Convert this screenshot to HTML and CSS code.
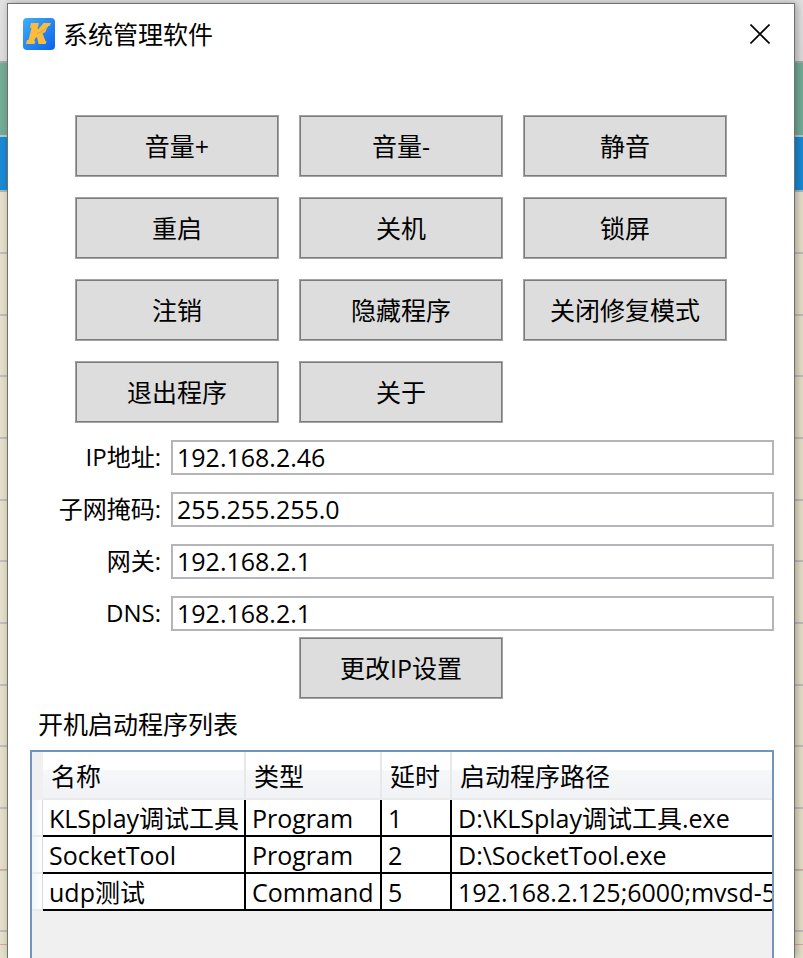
FILE: index.html
```html
<!DOCTYPE html>
<html lang="zh-CN">
<head>
    <meta charset="UTF-8">
    <meta name="viewport" content="width=device-width, initial-scale=1.0">
    <title>系统管理软件</title>
    <link rel="stylesheet" href="styles.css">
</head>
<body>
    <main class="window">
        <header class="title-bar">
            <svg class="logo" viewBox="0 0 32 32" aria-hidden="true">
                <defs>
                    <linearGradient id="logo-bg" x1="0" y1="0" x2="1" y2="1">
                        <stop offset="0" stop-color="#3fb0f8"/>
                        <stop offset="1" stop-color="#0c62ea"/>
                    </linearGradient>
                </defs>
                <rect width="32" height="32" rx="4" fill="url(#logo-bg)"/>
                <path d="M8 5h8l-1.500 6h1l5-6h7.500l-1.500 3h-1l-2 3-1 3-3 1.500 3 7.500h1l-.8 3h-7.200l-1.500-7-2 1.500-.7 2.500h1l-.7 3H3l1-4h1.500L8.500 10H7z" fill="#fdbb3c"/>
                <path d="M14 15.500c4-1 7-3 10-6.500" fill="none" stroke="#c9a860" stroke-width="1"/>
            </svg>
            <h1 class="title">系统管理软件</h1>
            <button class="close" type="button" aria-label="关闭">
                <svg viewBox="0 0 20 20" aria-hidden="true">
                    <path d="M0.500 0.500L19.500 19.500M19.500 0.500L0.500 19.500" fill="none" stroke="#000" stroke-width="1.600"/>
                </svg>
            </button>
        </header>

        <div class="actions">
            <button class="btn" type="button">音量+</button>
            <button class="btn" type="button">音量-</button>
            <button class="btn" type="button">静音</button>
            <button class="btn" type="button">重启</button>
            <button class="btn" type="button">关机</button>
            <button class="btn" type="button">锁屏</button>
            <button class="btn" type="button">注销</button>
            <button class="btn" type="button">隐藏程序</button>
            <button class="btn" type="button">关闭修复模式</button>
            <button class="btn" type="button">退出程序</button>
            <button class="btn" type="button">关于</button>
        </div>

        <form class="network">
            <div class="field">
                <label for="ip">IP地址:</label>
                <input id="ip" type="text" value="192.168.2.46">
            </div>
            <div class="field">
                <label for="mask">子网掩码:</label>
                <input id="mask" type="text" value="255.255.255.0">
            </div>
            <div class="field">
                <label for="gateway">网关:</label>
                <input id="gateway" type="text" value="192.168.2.1">
            </div>
            <div class="field">
                <label for="dns">DNS:</label>
                <input id="dns" type="text" value="192.168.2.1">
            </div>
        </form>

        <div class="actions apply">
            <button class="btn" type="button">更改IP设置</button>
        </div>

        <h2 class="list-title" id="list-title">开机启动程序列表</h2>
        <div class="grid-box">
            <table class="programs" aria-labelledby="list-title">
                <colgroup>
                    <col class="col-handle">
                    <col class="col-name">
                    <col class="col-type">
                    <col class="col-delay">
                    <col>
                </colgroup>
                <thead>
                    <tr>
                        <td class="corner"></td>
                        <th>名称</th>
                        <th>类型</th>
                        <th>延时</th>
                        <th>启动程序路径</th>
                    </tr>
                </thead>
                <tbody>
                    <tr>
                        <td class="handle"></td>
                        <td>KLSplay调试工具</td>
                        <td>Program</td>
                        <td>1</td>
                        <td>D:\KLSplay调试工具.exe</td>
                    </tr>
                    <tr>
                        <td class="handle"></td>
                        <td>SocketTool</td>
                        <td>Program</td>
                        <td>2</td>
                        <td>D:\SocketTool.exe</td>
                    </tr>
                    <tr>
                        <td class="handle"></td>
                        <td>udp测试</td>
                        <td>Command</td>
                        <td>5</td>
                        <td>192.168.2.125;6000;mvsd-5</td>
                    </tr>
                </tbody>
            </table>
        </div>
    </main>
</body>
</html>
```
FILE: styles.css
```css
* {
    box-sizing: border-box;
}

/* The sheet behind the window: toolbar, green and blue bands, ruled rows */
body {
    margin: 0;
    height: 100vh;
    padding: 3px 8px 0 7px;
    overflow: hidden;
    display: flex;
    font-family: "Open Sans", "Noto Sans CJK SC", sans-serif;
    font-size: 25px;
    line-height: 32px;
    color: #000;
    background-color: #e6e0ca;
    background-image:
        linear-gradient(#e2e2e2 0, #dcdcdc 61px, #a8a8a8 61px, #a8a8a8 63px, #74ac98 63px, #74ac98 135px, #b4c8cc 135px, #b4c8cc 137px, #1a8ad6 137px, #1a8ad6 190px, #a8b8bc 190px, #a8b8bc 192px, transparent 192px),
        linear-gradient(transparent 869px, #dca8a0 869px, #dca8a0 870px, transparent 870px, transparent 944px, #dca8a0 944px, #dca8a0 945px, transparent 945px),
        repeating-linear-gradient(transparent 0, transparent 5px, #c0bebc 5px, #c0bebc 7px, transparent 7px, transparent 67px, #c0bebc 67px, #c0bebc 69px, transparent 69px, transparent 129px, #c0bebc 129px, #c0bebc 131px, transparent 131px, transparent 185px);
}

.window {
    flex: 1;
    min-width: 0;
    display: flex;
    flex-direction: column;
    background: #fff;
    border: 1px solid #707070;
    border-bottom: 0;
    box-shadow: 2px 0 8px rgba(0, 0, 0, 0.3);
}

.title-bar {
    display: flex;
    align-items: center;
    height: 60px;
    padding: 0 24px 0 15px;
}

.logo {
    width: 32px;
    height: 32px;
    margin-right: 8px;
}

.title {
    flex: 1;
    margin: 0;
    font-size: 25px;
    font-weight: 400;
}

.close {
    display: flex;
    padding: 0;
    border: 0;
    background: none;
}

.close svg {
    width: 20px;
    height: 20px;
}

.actions {
    display: grid;
    grid-template-columns: repeat(3, 1fr);
    gap: 20px;
    padding: 51px 67px 0;
}

.btn {
    height: 62px;
    padding: 0;
    border: 1px solid #a4a4a4;
    box-shadow: inset 0 0 0 1px #7c7c7c;
    background: #ddd;
    font: inherit;
    color: inherit;
}

.network {
    display: flex;
    flex-direction: column;
    gap: 17px;
    padding: 17px 20px 0 0;
}

.field {
    display: flex;
    align-items: center;
    height: 35px;
}

.field label {
    width: 163px;
    padding: 0 10px 2px 0;
    font-size: 24px;
    text-align: right;
}

.field input {
    flex: 1;
    min-width: 0;
    height: 35px;
    padding: 0 4px 2px;
    border: 2px solid #b4b4b9;
    background: #fff;
    font: inherit;
    color: inherit;
}

.apply {
    padding-top: 6px;
}

.apply .btn {
    grid-column: 2;
}

.list-title {
    margin: 9px 0 10px 30px;
    font-size: 25px;
    font-weight: 400;
}

.grid-box {
    flex: 1;
    margin: 0 20px 0 22px;
    border: 2px solid #7096bb;
    border-bottom: 0;
    background: #f0f0f0;
    overflow: hidden;
}

.programs {
    width: 100%;
    table-layout: fixed;
    border-collapse: separate;
    border-spacing: 0;
}

.col-handle {
    width: 11px;
}

.col-name {
    width: 203px;
}

.col-type {
    width: 136px;
}

.col-delay {
    width: 70px;
}

.programs th {
    height: 48px;
    padding: 2px 8px 0;
    border-right: 2px solid #e6e8ea;
    border-bottom: 2px solid #e8eaec;
    background: linear-gradient(#fff 0, #fff 40%, #f5f7f9 40%, #f0f2f5 100%);
    font-weight: 400;
    text-align: left;
    white-space: nowrap;
}

.programs td {
    padding: 0 6px;
    white-space: nowrap;
}

.programs tbody td {
    height: 37px;
    border-right: 2px solid #000;
    border-bottom: 2px solid #000;
    background: #fff;
}

.programs tbody .handle {
    padding: 0;
    border-right: 1px solid #d8dadd;
    border-bottom: 2px solid #e8eaec;
    background: linear-gradient(to right, #f2f3f5, #fff);
}

.programs th:last-child,
.programs tbody td:last-child {
    border-right: 0;
}
```
